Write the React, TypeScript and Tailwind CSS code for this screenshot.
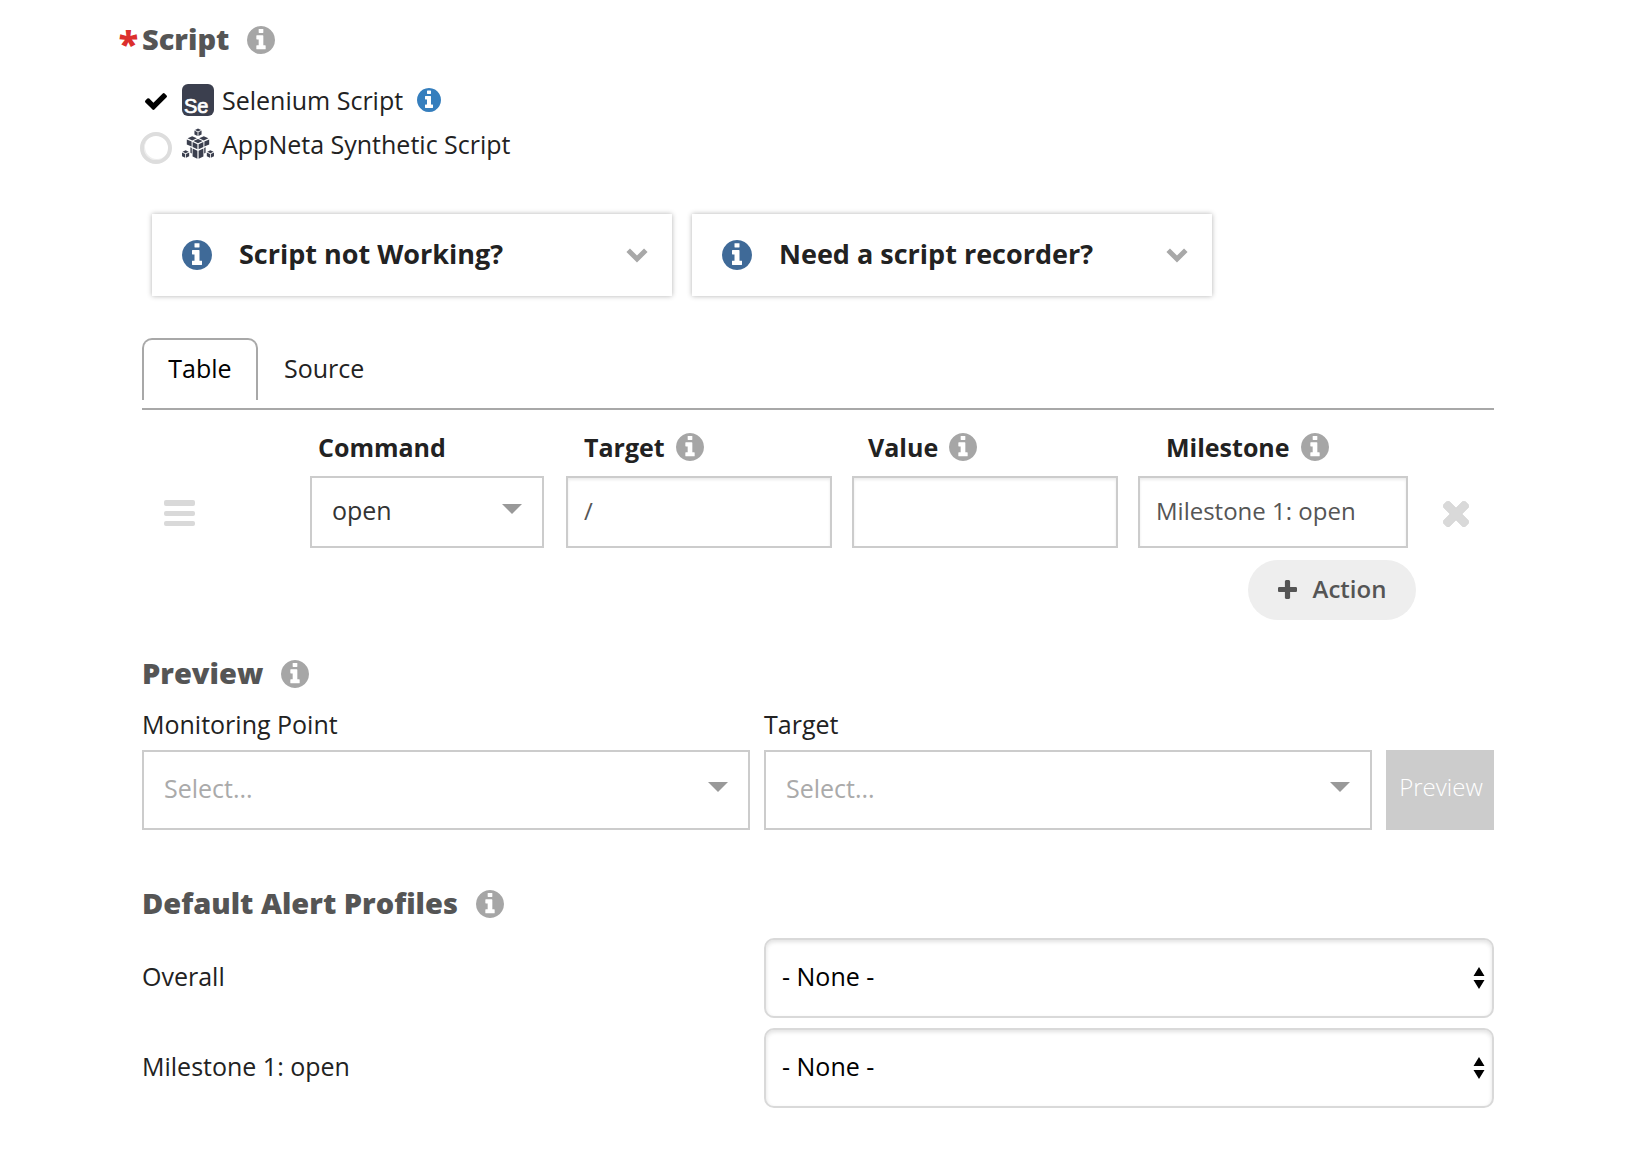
import { useState } from "react";
import type { ReactNode } from "react";

function InfoGlyph({ size, className }: { size: number; className: string }) {
  return (
    <svg width={size} height={size} viewBox="128 128 1536 1536" fill="currentColor" className={"shrink-0 " + className} aria-hidden="true">
      <path d="M1152 1376v-160q0-14-9-23t-23-9h-96v-512q0-14-9-23t-23-9h-320q-14 0-23 9t-9 23v160q0 14 9 23t23 9h96v320h-96q-14 0-23 9t-9 23v160q0 14 9 23t23 9h448q14 0 23-9t9-23zm-128-896v-160q0-14-9-23t-23-9h-192q-14 0-23 9t-9 23v160q0 14 9 23t23 9h192q14 0 23-9t9-23zm640 416q0 209-103 385.5t-279.5 279.5-385.5 103-385.5-103-279.5-279.5-103-385.5 103-385.5 279.5-279.5 385.5-103 385.5 103 279.5 279.5 103 385.5z" />
    </svg>
  );
}

function CheckIcon() {
  return (
    <svg width="22" height="17" viewBox="121 334 1550 1188" className="text-black" fill="currentColor" aria-hidden="true">
      <path d="M1671 566q0 40-28 68l-724 724-136 136q-28 28-68 28t-68-28l-136-136-362-362q-28-28-28-68t28-68l136-136q28-28 68-28t68 28l294 295 656-657q28-28 68-28t68 28l136 136q28 28 28 68z" />
    </svg>
  );
}

function TimesIcon() {
  return (
    <svg width="26" height="26" viewBox="302 366 1188 1188" fill="currentColor" stroke="currentColor" strokeWidth="40" aria-hidden="true">
      <path d="M1490 1322q0 40-28 68l-136 136q-28 28-68 28t-68-28l-294-294-294 294q-28 28-68 28t-68-28l-136-136q-28-28-28-68t28-68l294-294-294-294q-28-28-28-68t28-68l136-136q28-28 68-28t68 28l294 294 294-294q28-28 68-28t68 28l136 136q28 28 28 68t-28 68l-294 294 294 294q28 28 28 68z" />
    </svg>
  );
}

function PlusIcon() {
  return (
    <svg width="19" height="19" viewBox="192 128 1408 1408" fill="currentColor" aria-hidden="true">
      <path d="M1600 736v192q0 40-28 68t-68 28h-416v416q0 40-28 68t-68 28h-192q-40 0-68-28t-28-68v-416h-416q-40 0-68-28t-28-68v-192q0-40 28-68t68-28h416v-416q0-40 28-68t68-28h192q40 0 68 28t28 68v416h416q40 0 68 28t28 68z" />
    </svg>
  );
}

function InfoButton({ label, size = 28, className = "text-[#a6a6a6]" }: { label: string; size?: number; className?: string }) {
  return (
    <button type="button" aria-label={label} className="flex shrink-0">
      <InfoGlyph size={size} className={className} />
    </button>
  );
}

function SeleniumLogo() {
  return (
    <svg width="32" height="32" viewBox="0 0 32 32" className="shrink-0" aria-hidden="true">
      <rect width="32" height="32" rx="6" fill="#3b3f4e" />
      <text x="2" y="28.5" fontSize="20" stroke="white" strokeWidth="0.7" fill="white" className="font-['Liberation_Sans',sans-serif]">
        Se
      </text>
    </svg>
  );
}

function Cube({ x, y, s }: { x: number; y: number; s: number }) {
  return (
    <g transform={`translate(${x} ${y}) scale(${s})`}>
      <path d="M0 -5.2 4.4 -3.2 0 -1.1 -4.4 -3.2Z" />
      <path d="M-5.1 -2.3 -0.6 -0.1V5.4L-5.1 3.2Z" />
      <path d="M5.1 -2.3 0.6 -0.1V5.4L5.1 3.2Z" />
    </g>
  );
}

function SyntheticLogo() {
  return (
    <svg width="32" height="32" viewBox="0 0 32 32" fill="#3b3f4e" className="shrink-0" aria-hidden="true">
      <Cube x={16} y={4.2} s={0.7} />
      <Cube x={3.6} y={26} s={0.7} />
      <Cube x={28.4} y={26} s={0.7} />
      <path d="M10.2 8.2 14.9 10.3 10.2 12.4 5.6 10.3Z" />
      <path d="M21.8 8.2 26.4 10.3 21.8 12.4 17.1 10.3Z" />
      <path d="M16 11 20.6 13.1 16 15.3 11.4 13.1Z" />
      <path d="M4.8 11.4 9.6 13.6V18.6L4.8 16.4Z" />
      <path d="M10.6 14.1 15.4 16.3V21.3L10.6 19.1Z" />
      <path d="M27.2 11.4 22.4 13.6V18.6L27.2 16.4Z" />
      <path d="M21.4 14.1 16.6 16.3V21.3L21.4 19.1Z" />
      <path d="M8.4 19.3 9.8 20V25.4L8.4 24.8Z" />
      <path d="M10.6 20.5 15.4 22.7V30.8L10.6 28.6Z" />
      <path d="M23.6 19.3 22.2 20V25.4L23.6 24.8Z" />
      <path d="M21.4 20.5 16.6 22.7V30.8L21.4 28.6Z" />
    </svg>
  );
}

function SectionTitle({ children, info, required }: { children: ReactNode; info: string; required?: boolean }) {
  return (
    <div className="relative flex h-8 items-center gap-[18px]">
      {required && (
        <span aria-hidden="true" className="absolute top-1 right-full pr-1 text-4xl leading-8 font-extrabold text-[#dc2f2c]">
          *
        </span>
      )}
      <h2 className="pb-0.5 text-[29px] leading-8 font-extrabold text-[#555555]">{children}</h2>
      <InfoButton label={info} />
    </div>
  );
}

function HelpCard({ title }: { title: string }) {
  return (
    <button type="button" aria-expanded="false" className="flex h-[82px] w-[520px] items-center bg-white pl-[30px] pr-6 text-left shadow-[0_0_5px_rgba(0,0,0,0.3)]">
      <InfoGlyph size={30} className="text-[#3f6a98]" />
      <span className="ml-[27px] flex-1 pb-0.5 text-[27px] leading-9 font-bold text-[#222222]">{title}</span>
      <svg width="22" height="16" viewBox="0 0 22 16" aria-hidden="true">
        <path d="M2.2 3.2 11 12 19.8 3.2" fill="none" stroke="#a8a8a8" strokeWidth="5" />
      </svg>
    </button>
  );
}

function PlainSelect({ id, label, value, className }: { id: string; label?: string; value: string; className: string }) {
  return (
    <div className="relative">
      <select id={id} aria-label={label} className={"w-full appearance-none border-2 border-[#cccccc] bg-white pl-5 pr-12 pb-0.5 text-[25px] outline-none " + className}>
        <option>{value}</option>
      </select>
      <svg width="20" height="10" viewBox="0 0 20 10" className="pointer-events-none absolute right-[22px] top-1/2 -mt-2" aria-hidden="true">
        <path d="M0 0h20L10 10z" fill="#999999" />
      </svg>
    </div>
  );
}

function ProfileRow({ id, label }: { id: string; label: string }) {
  return (
    <div className="grid grid-cols-[622fr_730fr] items-center">
      <label htmlFor={id} className="pb-1 text-[25px] leading-8">{label}</label>
      <div className="relative">
        <select id={id} className="h-20 w-full appearance-none rounded-[10px] border-2 border-[#d9d9d9] bg-white pl-4 pr-10 pb-0.5 text-[25px] text-black shadow-[inset_0_2px_4px_rgba(0,0,0,0.12)] outline-none">
          <option>- None -</option>
        </select>
        <svg width="12" height="22" viewBox="0 0 12 22" className="pointer-events-none absolute right-[9px] top-1/2 -mt-[11px]" aria-hidden="true">
          <path d="M6 0 11.5 9H.5zM6 22 .5 13h11z" fill="black" />
        </svg>
      </div>
    </div>
  );
}

function ScriptRadio({ label, value, current, onPick }: { label: string; value: string; current: string; onPick: (v: string) => void }) {
  const checked = value === current;
  return (
    <span className="relative -ml-[2px] mr-[10px] flex w-8 shrink-0 items-center justify-center">
      <input
        type="radio"
        name="script"
        aria-label={label}
        value={value}
        checked={checked}
        onChange={() => onPick(value)}
        className="absolute inset-0 size-full appearance-none opacity-0"
      />
      {checked ? (
        <span className="mt-0.5"><CheckIcon /></span>
      ) : (
        <span className="mt-2 size-8 rounded-full border-4 border-[#dddddd] bg-white shadow-[inset_1px_-1px_0_#eeeeee]" />
      )}
    </span>
  );
}

const inputClass =
  "h-[72px] w-full border-2 border-[#cccccc] bg-white px-4 pb-1 text-2xl text-[#555555] shadow-[inset_0_2px_3px_rgba(0,0,0,0.08)] outline-none";

export default function App() {
  const [script, setScript] = useState("selenium");
  const [tab, setTab] = useState("table");
  const [target, setTarget] = useState("/");
  const [value, setValue] = useState("");
  const [milestone, setMilestone] = useState("Milestone 1: open");

  return (
    <main className="bg-white pt-6 pb-12 pl-[142px] pr-[132px] font-['Open_Sans',sans-serif] text-[#222222]">
      <SectionTitle info="About scripts" required>Script</SectionTitle>

      <fieldset aria-label="Script type" className="mt-[22px]">
        <div className="flex h-11 items-center">
          <label className="flex items-center text-[25px] leading-8">
            <ScriptRadio label="Selenium Script" value="selenium" current={script} onPick={setScript} />
            <SeleniumLogo />
            <span className="ml-2">Selenium Script</span>
          </label>
          <span className="ml-[14px]"><InfoButton label="About Selenium scripts" size={24} className="text-[#357ebd]" /></span>
        </div>
        <div className="flex h-11 items-center">
          <label className="flex items-center text-[25px] leading-8">
            <ScriptRadio label="AppNeta Synthetic Script" value="appneta" current={script} onPick={setScript} />
            <SyntheticLogo />
            <span className="ml-2">AppNeta Synthetic Script</span>
          </label>
        </div>
      </fieldset>

      <div className="mt-12 ml-[10px] flex gap-5">
        <HelpCard title="Script not Working?" />
        <HelpCard title="Need a script recorder?" />
      </div>

      <div role="tablist" className="mt-[42px] flex border-b-2 border-[#a8a8a8] pb-2">
        <button type="button" role="tab" aria-selected={tab === "table"} onClick={() => setTab("table")} className="h-[62px] w-[116px] rounded-t-[10px] border-2 border-b-0 border-[#a8a8a8] pb-1 text-[25px] leading-8 text-black">
          Table
        </button>
        <button type="button" role="tab" aria-selected={tab === "source"} onClick={() => setTab("source")} className="h-[62px] px-[26px] pb-0.5 text-[25px] leading-8">
          Source
        </button>
      </div>

      <table className="mt-[17px] w-full table-fixed text-left">
        <colgroup>
          <col className="w-[168px]" />
          <col className="w-[256px]" />
          <col />
          <col />
          <col className="w-[270px]" />
          <col className="w-[86px]" />
        </colgroup>
        <thead>
          <tr className="h-[49px] align-top text-[25px] leading-10 font-bold">
            <td />
            <th scope="col" className="pl-2">Command</th>
            <th scope="col" className="pl-[18px]">
              <span className="flex items-center gap-[11px]">Target <InfoButton label="About target" /></span>
            </th>
            <th scope="col" className="pl-4">
              <span className="flex items-center gap-[11px]">Value <InfoButton label="About value" /></span>
            </th>
            <th scope="col" className="pl-7">
              <span className="flex items-center gap-[11px]">Milestone <InfoButton label="About milestone" /></span>
            </th>
            <td />
          </tr>
        </thead>
        <tbody>
          <tr>
            <td className="pl-[22px]">
              <button type="button" aria-label="Reorder action" className="flex flex-col gap-[5px] pt-[2px]">
                <span className="h-[6px] w-[31px] rounded-[2px] bg-[#d9d9d9]" />
                <span className="h-[5px] w-[31px] rounded-[2px] bg-[#d9d9d9]" />
                <span className="h-[5px] w-[31px] rounded-[2px] bg-[#d9d9d9]" />
              </button>
            </td>
            <td className="pr-[22px]">
              <PlainSelect id="command" label="Command" value="open" className="h-[72px] text-[#333333]" />
            </td>
            <td className="pr-5">
              <input aria-label="Target" value={target} onChange={(e) => setTarget(e.target.value)} className={inputClass} />
            </td>
            <td className="pr-5">
              <input aria-label="Value" value={value} onChange={(e) => setValue(e.target.value)} className={inputClass} />
            </td>
            <td>
              <input aria-label="Milestone" value={milestone} onChange={(e) => setMilestone(e.target.value)} className={inputClass} />
            </td>
            <td className="pl-[35px]">
              <button type="button" aria-label="Delete action" className="flex pt-1 text-[#d9d9d9]">
                <TimesIcon />
              </button>
            </td>
          </tr>
        </tbody>
      </table>

      <div className="mt-3 mr-[78px] flex justify-end">
        <button type="button" className="flex h-[60px] w-[168px] items-center justify-center gap-4 rounded-full bg-[#eeeeee] pb-0.5 text-2xl font-semibold text-[#555555]">
          <PlusIcon />
          Action
        </button>
      </div>

      <div className="mt-[38px]">
        <SectionTitle info="About preview">Preview</SectionTitle>
      </div>
      <div className="mt-4 grid grid-cols-[608fr_608fr_108fr] items-end gap-x-[14px]">
        <div>
          <label htmlFor="monitoring-point" className="block h-11 pt-0.5 text-[25px] leading-8">Monitoring Point</label>
          <PlainSelect id="monitoring-point" value="Select..." className="h-20 text-[#aaaaaa]" />
        </div>
        <div>
          <label htmlFor="preview-target" className="block h-11 pt-0.5 text-[25px] leading-8">Target</label>
          <PlainSelect id="preview-target" value="Select..." className="h-20 text-[#aaaaaa]" />
        </div>
        <button type="button" disabled className="h-20 bg-[#cccccc] pb-1.5 pl-0.5 text-2xl font-light text-white">Preview</button>
      </div>

      <div className="mt-[58px]">
        <SectionTitle info="About default alert profiles">Default Alert Profiles</SectionTitle>
      </div>
      <div className="mt-[18px] flex flex-col gap-[10px]">
        <ProfileRow id="overall" label="Overall" />
        <ProfileRow id="milestone-profile" label="Milestone 1: open" />
      </div>
    </main>
  );
}
